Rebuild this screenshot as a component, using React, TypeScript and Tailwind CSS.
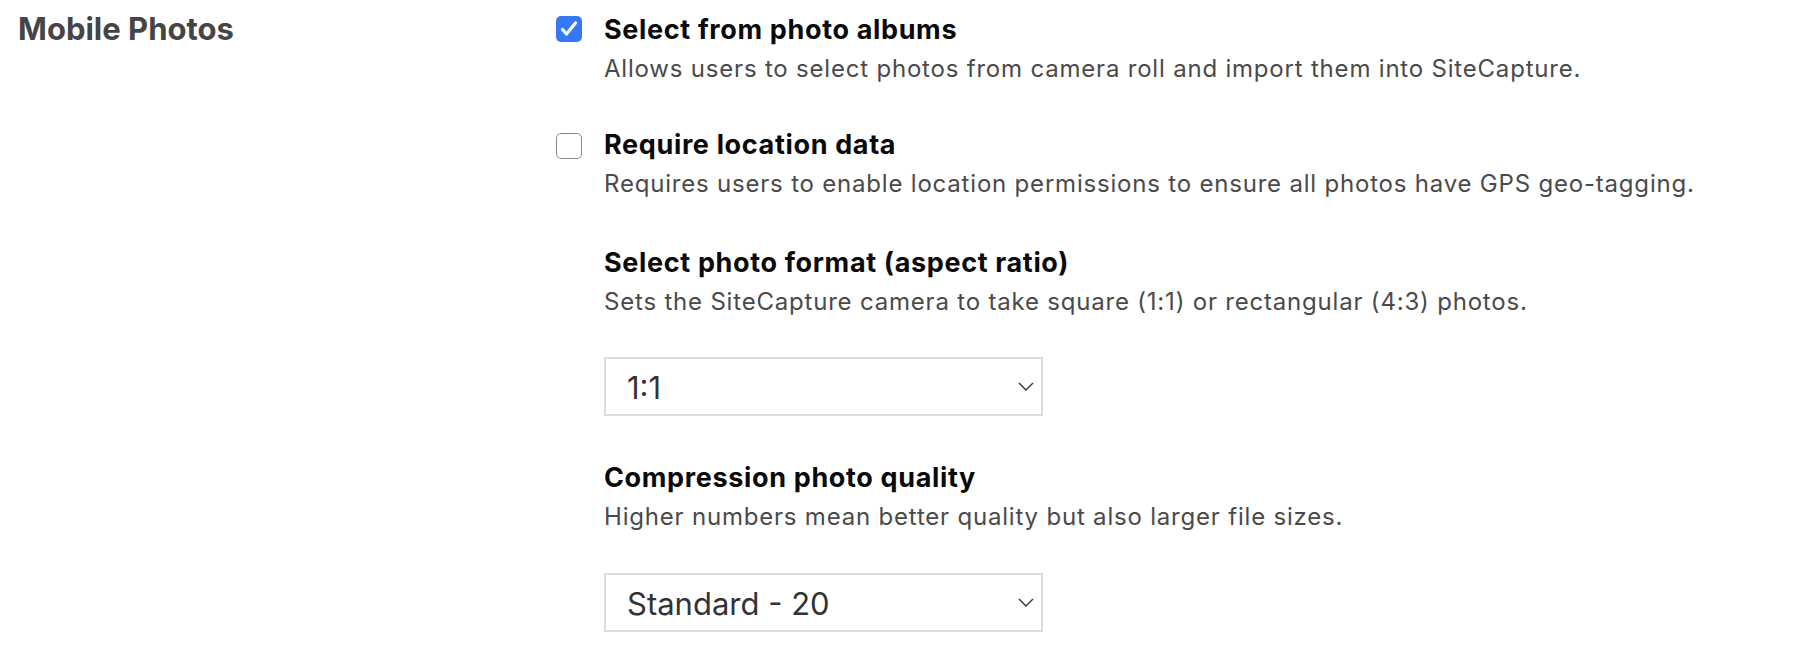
import React from 'react';

const CheckBox: React.FC<{ checked?: boolean; className?: string }> = ({ checked, className }) => {
    if (checked) {
        return (
            <div className={`w-[26px] h-[26px] shrink-0 rounded-[5px] bg-[#3478f6] flex items-center justify-center ${className ?? ''}`}>
                <svg width="26" height="26" viewBox="0 0 26 26" fill="none">
                    <path d="M6.5 13.5l4 4.5 9-11" stroke="white" strokeWidth="3.2" strokeLinecap="round" strokeLinejoin="round" />
                </svg>
            </div>
        );
    }
    return (
        <div className={`w-[26px] h-[26px] shrink-0 rounded-[5px] border-[1.5px] border-[#8a8a8a] bg-white ${className ?? ''}`} />
    );
};

const Option: React.FC<{ checked?: boolean; title: string; desc: string; className?: string; boxClass: string }> = ({
    checked,
    title,
    desc,
    className,
    boxClass,
}) => {
    return (
        <div className={`flex gap-[22px] ${className ?? ''}`}>
            <CheckBox checked={checked} className={boxClass} />
            <div>
                <h3 className="text-[27px] leading-[32px] font-bold tracking-[0.65px] text-[#0a0a0a]">{title}</h3>
                <p className="mt-[9px] text-[24px] leading-[28px] tracking-[0.8px] text-[#4a4a4a]">{desc}</p>
            </div>
        </div>
    );
};

const Select: React.FC<{ value: string; className?: string }> = ({ value, className }) => {
    return (
        <div
            className={`w-[439px] h-[59px] border-2 border-[#dcdcdc] bg-white flex items-center justify-between pl-[21px] pr-[7px] ${className ?? ''}`}
        >
            <span className="pt-[4px] text-[31px] text-[#333333]">{value}</span>
            <svg width="16" height="9" viewBox="0 0 16 9" fill="none">
                <path d="M1 1l7 7 7-7" stroke="#333333" strokeWidth="1.4" />
            </svg>
        </div>
    );
};

const App: React.FC = () => {
    return (
        <div className="min-h-screen bg-white font-[Inter,sans-serif] flex pl-[18px] pt-[9px]">
            <div className="w-[538px] shrink-0">
                <h2 className="text-[31px] leading-[40px] font-bold text-[#454545]">Mobile Photos</h2>
            </div>
            <div className="pt-[5px]">
                <Option
                    checked
                    boxClass="mt-[2px]"
                    title="Select from photo albums"
                    desc="Allows users to select photos from camera roll and import them into SiteCapture."
                />
                <Option
                    boxClass="mt-[4px]"
                    className="mt-[46px]"
                    title="Require location data"
                    desc="Requires users to enable location permissions to ensure all photos have GPS geo-tagging."
                />
                <div className="mt-[49px] pl-[48px]">
                    <h3 className="text-[27px] leading-[32px] font-bold tracking-[0.65px] text-[#0a0a0a]">
                        Select photo format (aspect ratio)
                    </h3>
                    <p className="mt-[9px] text-[24px] leading-[28px] tracking-[0.8px] text-[#4a4a4a]">
                        Sets the SiteCapture camera to take square (1:1) or rectangular (4:3) photos.
                    </p>
                    <Select value="1:1" className="mt-[41px]" />
                    <h3 className="mt-[46px] text-[27px] leading-[32px] font-bold tracking-[0.65px] text-[#0a0a0a]">
                        Compression photo quality
                    </h3>
                    <p className="mt-[9px] text-[24px] leading-[28px] tracking-[0.8px] text-[#4a4a4a]">
                        Higher numbers mean better quality but also larger file sizes.
                    </p>
                    <Select value="Standard - 20" className="mt-[42px]" />
                </div>
            </div>
        </div>
    );
};

export default App;
